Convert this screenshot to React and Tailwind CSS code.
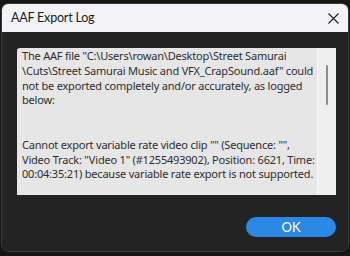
import React from "react";

const logLines = [
  'The AAF file "C:\\Users\\rowan\\Desktop\\Street Samurai',
  '\\Cuts\\Street Samurai Music and VFX_CrapSound.aaf" could',
  "not be exported completely and/or accurately, as logged",
  "below:",
  "",
  "",
  'Cannot export variable rate video clip "" (Sequence: "",',
  'Video Track: "Video 1" (#1255493902), Position: 6621, Time:',
  "00:04:35:21) because variable rate export is not supported.",
];

const App = () => {
  return (
    <div className="w-[350px] h-[256px] bg-[#161616] pt-[3px] px-[1px] pb-[4px] flex flex-col">
      <div
        className="flex-1 flex flex-col rounded-t-[7px] rounded-b-[8px] overflow-hidden border border-[#3a3a3a]"
        style={{ fontFamily: "Lato, 'Noto Sans', sans-serif" }}
      >
        {/* title bar */}
        <div className="h-[28px] bg-[#f3f3f7] flex items-center justify-between pl-[9px] pr-[8px] shrink-0">
          <span className="text-[12.5px] tracking-[-0.2px] text-[#1a1a1a] leading-none">AAF Export Log</span>
          <svg width="11" height="11" viewBox="0 0 11 11" className="mr-[1px]">
            <path d="M0.5 0.5 L10.5 10.5 M10.5 0.5 L0.5 10.5" stroke="#1f1f1f" strokeWidth="1.1" />
          </svg>
        </div>

        {/* body */}
        <div className="flex-1 bg-[#232323] pt-[16px] pl-[15px] pr-[12px] flex flex-col">
          <div className="h-[147px] flex bg-[#e6e6e6] rounded-tl-[3px] overflow-hidden">
            <div
              className="flex-1 pl-[5px] pt-[1px] text-[11px] tracking-[-0.2px] leading-[14.8px] text-[#2e2e2e]"
              style={{ fontFamily: "'Noto Sans', sans-serif" }}
            >
              {logLines.map((line, i) => (
                <div key={i} className="whitespace-pre h-[14.8px]">
                  {line}
                </div>
              ))}
            </div>
            <div className="w-[19px] bg-[#efefef] border-l border-[#fafafa] flex justify-center pt-[17px]">
              <div className="w-[2px] h-[40px] bg-[#8c8c8c] rounded-full"></div>
            </div>
          </div>

          <div className="flex justify-end mt-[22px]">
            <button className="w-[90px] h-[20px] rounded-full bg-[#2d87e6] text-white text-[13px] leading-none">
              OK
            </button>
          </div>
        </div>
      </div>
    </div>
  );
};

export default App;
